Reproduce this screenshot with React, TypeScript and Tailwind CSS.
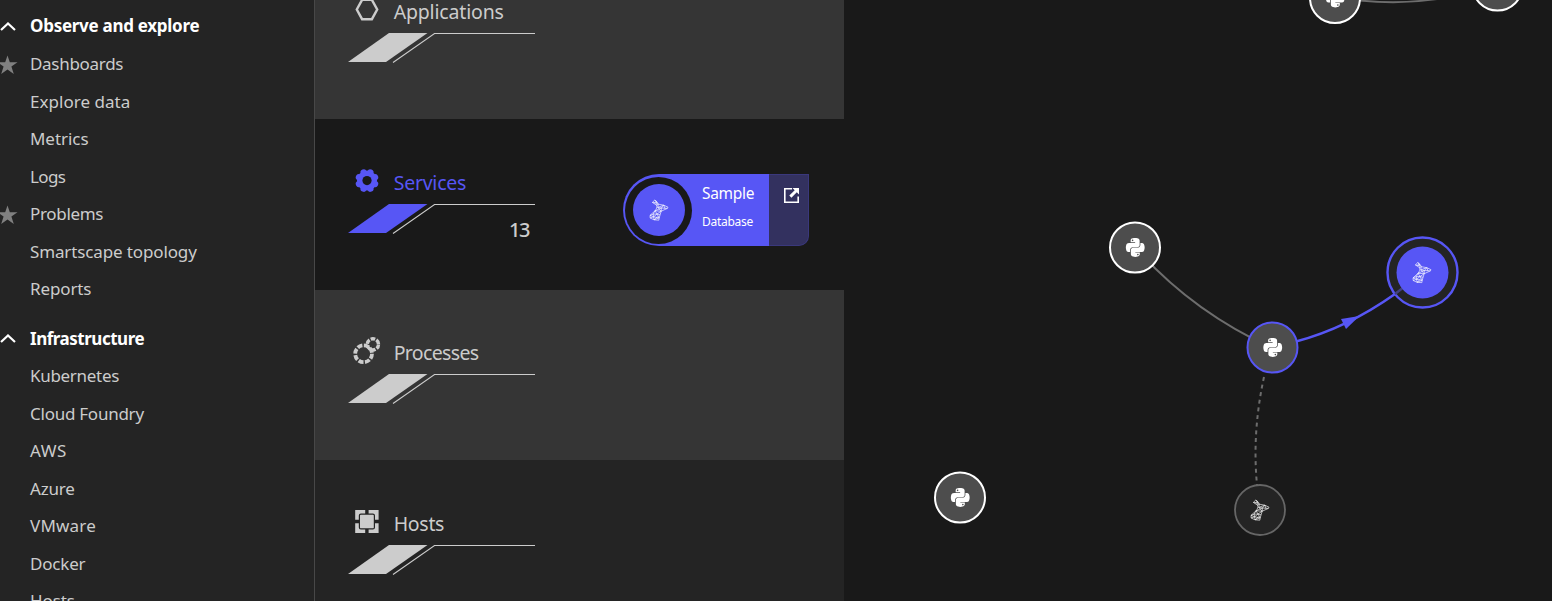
import React from "react";
import { FaPython } from "react-icons/fa";

const SANS = "font-['Noto_Sans','Open_Sans',sans-serif]";

type Item = { label: string; star?: boolean; tracking: string };

const observe: Item[] = [
  { label: "Dashboards", star: true, tracking: "tracking-[-0.3px]" },
  { label: "Explore data", tracking: "tracking-[0.03px]" },
  { label: "Metrics", tracking: "tracking-[-0.05px]" },
  { label: "Logs", tracking: "tracking-[-0.65px]" },
  { label: "Problems", star: true, tracking: "tracking-[-0.33px]" },
  { label: "Smartscape topology", tracking: "tracking-[-0.13px]" },
  { label: "Reports", tracking: "tracking-[-0.12px]" },
];

const infrastructure: Item[] = [
  { label: "Kubernetes", tracking: "tracking-[-0.3px]" },
  { label: "Cloud Foundry", tracking: "tracking-[-0.25px]" },
  { label: "AWS", tracking: "tracking-[0.5px]" },
  { label: "Azure", tracking: "tracking-[-0.2px]" },
  { label: "VMware", tracking: "tracking-[0.2px]" },
  { label: "Docker", tracking: "tracking-[-0.2px]" },
  { label: "Hosts", tracking: "tracking-[-0.1px]" },
];

function Star() {
  return (
    <svg width="18" height="20" viewBox="0 0 18 20" className="shrink-0">
      <path
        d="M7.5 0.5L9.8 7.2H17.5L11.4 11.6L13.8 19L7.5 14.5L1.2 19L3.6 11.6L-2.5 7.2H5.2Z"
        fill="#808080"
      />
    </svg>
  );
}

function NavHeader({ label, tracking }: { label: string; tracking: string }) {
  return (
    <div className="flex h-10 shrink-0 items-center">
      <div className="w-[30px] shrink-0">
        <svg width="16" height="9" viewBox="0 0 16 9">
          <path d="M1 8L8 1.5L15 8" fill="none" stroke="#fff" strokeWidth="2.2" />
        </svg>
      </div>
      <span className={`text-[17px] font-bold whitespace-nowrap text-white ${tracking}`}>{label}</span>
    </div>
  );
}

function NavItem({ label, star, tracking }: Item) {
  return (
    <div className="flex h-[37.5px] shrink-0 items-center pb-0.5">
      <div className="flex w-[30px] shrink-0 items-center pt-0.5">{star && <Star />}</div>
      <span className={`text-[17px] whitespace-nowrap text-[#cccccc] ${tracking}`}>{label}</span>
    </div>
  );
}

function SqlServerIcon({ x, y }: { x?: number; y?: number }) {
  return (
    <svg x={x} y={y} width="20" height="22" viewBox="0 0 20 22" fill="none" stroke="#fff" strokeWidth="0.65" strokeLinejoin="round">
      <path d="M5.8 1L3.4 3.4L7.6 6.2C8.3 8 7.6 9.8 6 11.8L1 16.4L1.2 19L5 20.8L9.8 21.2L10.2 18.8L12.2 12.2L18.4 9.4L19 8.2L14.8 6.2L9.4 5.2L8 2.8Z" />
      <path d="M5.8 1L8.2 4.4L3.4 3.4M8 2.8L5.4 3.6M8.2 4.4L7.6 6.2L9.4 5.2L8.7 8.4L14.8 6.2L12.4 9L18.4 9.4M8.7 8.4L12.4 9L6 11.8L12.2 12.2L8.7 8.4M14.8 6.2L16 9.6M12.4 9L12.2 12.2" />
      <path d="M6 11.8L8 15L12.2 12.2M6 11.8L4.2 15.2L8 15L11 15.8M4.2 15.2L1 16.4L4.6 17.8L4.2 15.2M8 15L4.6 17.8L10.2 18.8L8 15M4.6 17.8L5 20.8L8.5 17.5M4.6 17.8L1.2 19M5 20.8L10.2 18.8" />
    </svg>
  );
}

function HexagonIcon() {
  return (
    <svg width="28" height="28" viewBox="0 0 28 28">
      <path d="M9.1 3.8H18.9L24.2 13.5L18.9 23.2H9.1L3.8 13.5Z" fill="none" stroke="#ccc" strokeWidth="2.4" />
    </svg>
  );
}

const GEAR_TEETH = [22.5, 67.5, 112.5, 157.5, 202.5, 247.5, 292.5, 337.5];

function GearIcon() {
  return (
    <svg width="28" height="28" viewBox="0 0 28 28">
      <g fill="#5756f5">
        {GEAR_TEETH.map((a) => (
          <circle key={a} cx="14" cy="4.9" r="3.2" transform={`rotate(${a} 14 13.6)`} />
        ))}
      </g>
      <circle cx="14" cy="13.6" r="10" fill="#5756f5" />
      <circle cx="14" cy="13.6" r="4.6" fill="#191919" />
    </svg>
  );
}

function ChainGearsIcon() {
  return (
    <svg width="28" height="28" viewBox="0 0 28 28" fill="none" stroke="#ccc">
      <circle cx="10.6" cy="16.8" r="8.4" strokeWidth="3.8" strokeDasharray="5.1 1.497" />
      <circle cx="19.9" cy="7.4" r="5.6" strokeWidth="3.4" strokeDasharray="4.6 1.265" />
    </svg>
  );
}

function HostIcon() {
  return (
    <svg width="28" height="28" viewBox="0 0 28 28">
      <path d="M2.2 2H12.2V11.8H2.2ZM15.6 2H25.6V11.8H15.6ZM2.2 15.2H12.2V25H2.2ZM15.6 15.2H25.6V25H15.6Z" fill="#ccc" />
      <rect x="6.4" y="6.1" width="15" height="14.8" rx="1.5" fill="#ccc" stroke="#242424" strokeWidth="1.2" />
    </svg>
  );
}

function Slash({ active }: { active?: boolean }) {
  return (
    <svg width="190" height="32" viewBox="0 0 190 32">
      <path d="M41 1H79.5L38 30H0Z" fill={active ? "#5756f5" : "#cccccc"} />
      <path d="M45 30.5L86.5 1.5H187" fill="none" stroke="#ccc" strokeWidth="1.1" />
    </svg>
  );
}

function Layer({
  title,
  icon,
  className,
  textClass,
  active,
  count,
  children,
}: {
  title: string;
  icon: React.ReactNode;
  className: string;
  textClass: string;
  active?: boolean;
  count?: string;
  children?: React.ReactNode;
}) {
  return (
    <section className={`flex shrink-0 ${className}`}>
      <div className="flex w-[223px] shrink-0 flex-col pl-[33px]">
        <div className="flex h-9 shrink-0 items-start pl-[4.7px]">
          {icon}
          <h2 className={`ml-[13px] pt-0.5 text-[19.5px] leading-7 whitespace-nowrap ${textClass}`}>{title}</h2>
        </div>
        <Slash active={active} />
        {count && (
          <div className="-mt-[19px] pr-[9px] text-right text-[20px] leading-7 font-medium tracking-[-1.4px] text-[#ccc]">
            {count}
          </div>
        )}
      </div>
      {children}
    </section>
  );
}

function ServiceCard() {
  return (
    <div className="mt-[7px] ml-[85px] flex h-[72px] w-[186px]">
      <div className="flex w-[146px] items-center rounded-l-full bg-[#5756f5] pl-0.5">
        <div className="flex size-[67px] shrink-0 items-center justify-center rounded-full bg-[#191919]">
          <div className="flex size-[52px] items-center justify-center rounded-full bg-[#5756f5]">
            <SqlServerIcon />
          </div>
        </div>
        <div className="-mt-1.5 ml-2.5 flex flex-col text-white">
          <span className="text-[15.5px] leading-7 tracking-[-0.3px]">Sample</span>
          <span className="pt-px text-[12px] leading-7 tracking-[-0.28px]">Database</span>
        </div>
      </div>
      <div className="flex w-10 justify-center rounded-br-[10px] border border-l-0 border-[#3a387c] bg-[#33315f] pt-3 pl-1.5">
        <svg width="17" height="17" viewBox="0 0 17 17">
          <path d="M9 1.8H1.8V15.2H15.2V9.5" fill="none" stroke="#fff" strokeWidth="1.6" />
          <path d="M9.5 1H16V7.5L13.8 5.3L8.4 10.7L6.3 8.6L11.7 3.2Z" fill="#fff" />
        </svg>
      </div>
    </div>
  );
}

function PythonNode({ x, y, stroke = "#ffffff" }: { x: number; y: number; stroke?: string }) {
  return (
    <g transform={`translate(${x} ${y})`}>
      <circle r="25" fill="#4d4d4d" stroke={stroke} strokeWidth="2" />
      <FaPython x={-10.5} y={-10.75} size={21.5} color="#fff" />
    </g>
  );
}

function Topology() {
  return (
    <svg width="708" height="601" viewBox="844 0 708 601" className="block">
      <g fill="none" stroke="#6d6d6d" strokeWidth="2">
        <path d="M1360 0.5Q1400 4.5 1437 -1" />
        <path d="M1135 247Q1191 311 1272 348" />
        <path d="M1264 377Q1252 432 1257 485" strokeDasharray="4 3.7" />
      </g>
      <circle cx="1422.5" cy="272.5" r="35" fill="#242424" stroke="#5756f5" strokeWidth="2.4" />
      <path d="M1296 341.5Q1347 328 1395 294" fill="none" stroke="#5756f5" strokeWidth="2.6" />
      <path d="M1395 294L1404 287" stroke="#42417f" strokeWidth="2.4" />
      <path d="M1359.5 316L1341 319L1346 329Z" fill="#5756f5" />
      <circle cx="1422.5" cy="272.5" r="26" fill="#5756f5" />
      <SqlServerIcon x={1412} y={261.5} />
      <PythonNode x={1335} y={-2} />
      <PythonNode x={1497.5} y={-14.5} />
      <PythonNode x={1135} y={247.5} />
      <PythonNode x={1272.5} y={347.5} stroke="#5756f5" />
      <PythonNode x={960} y={497.5} />
      <circle cx="1260" cy="510" r="25" fill="#242424" stroke="#666" strokeWidth="1.8" />
      <SqlServerIcon x={1250} y={499} />
    </svg>
  );
}

export default function App() {
  return (
    <div className={`flex h-[601px] w-[1552px] overflow-hidden bg-[#191919] ${SANS}`}>
      <nav className="flex w-[315px] shrink-0 flex-col overflow-hidden border-r border-[#484848] bg-[#242424] pt-1.5">
        <NavHeader label="Observe and explore" tracking="tracking-[-0.28px]" />
        {observe.map((i) => (
          <NavItem key={i.label} {...i} />
        ))}
        <div className="h-[9.9px] shrink-0" />
        <NavHeader label="Infrastructure" tracking="tracking-[-0.48px]" />
        {infrastructure.map((i) => (
          <NavItem key={i.label} {...i} />
        ))}
      </nav>
      <main className="flex w-[529px] shrink-0 flex-col overflow-hidden">
        <Layer title="Applications" icon={<HexagonIcon />} className="-mt-[52px] h-[171px] bg-[#353535] pt-12" textClass="text-[#ccc] tracking-[-0.17px]" />
        <Layer title="Services" icon={<GearIcon />} className="h-[171px] bg-[#191919] pt-12" textClass="text-[#5756f5] tracking-[-0.25px]" active count="13">
          <ServiceCard />
        </Layer>
        <Layer title="Processes" icon={<ChainGearsIcon />} className="h-[170px] bg-[#353535] pt-[47px]" textClass="text-[#ccc] tracking-[-0.65px]" />
        <Layer title="Hosts" icon={<HostIcon />} className="h-[171px] bg-[#242424] pt-12" textClass="text-[#ccc] tracking-[-0.3px]" />
      </main>
      <Topology />
    </div>
  );
}
